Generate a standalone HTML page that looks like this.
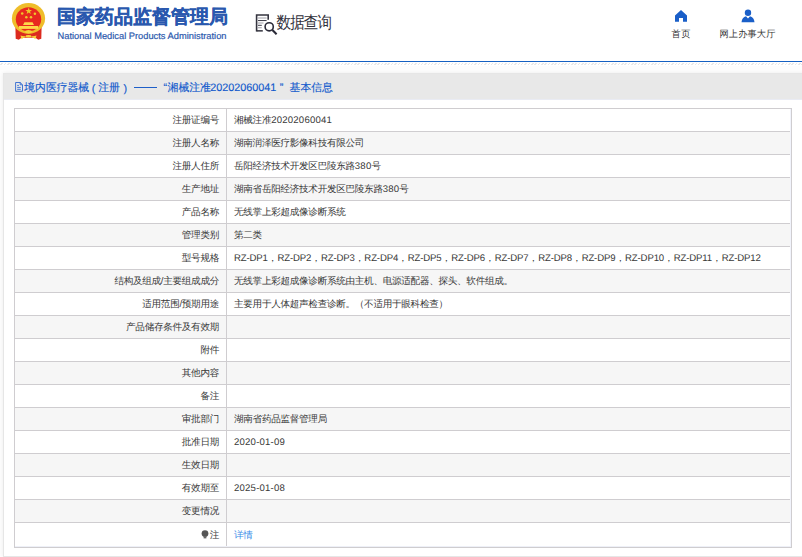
<!DOCTYPE html>
<html><head><meta charset="utf-8">
<style>
*{margin:0;padding:0;box-sizing:border-box}
html,body{width:802px;height:557px;overflow:hidden;background:#fff;font-family:"Liberation Sans",sans-serif;text-rendering:geometricPrecision}
#hd{position:absolute;left:0;top:0;width:802px;height:61px;background:#fff}
#emb{position:absolute;left:0;top:0;width:56px;height:44px}
#t1{position:absolute;left:57px;top:6px;font-size:19px;font-weight:bold;color:#2958ae;-webkit-text-stroke:0.25px #2958ae;white-space:nowrap;line-height:24px}
#t2{position:absolute;left:57.5px;top:29.6px;font-size:9.3px;color:#2c5aae;-webkit-text-stroke:0.2px #2c5aae;white-space:nowrap;line-height:12px}
#qicon{position:absolute;left:255px;top:13px;width:23px;height:23px}
#qt{position:absolute;left:276.5px;top:12px;font-size:14.5px;letter-spacing:-0.87px;transform:scaleY(1.15);transform-origin:0 0;color:#30303a;white-space:nowrap;line-height:20px}
.nav{position:absolute;top:0;text-align:center;font-size:9.2px;color:#333;white-space:nowrap}
.nav span{position:absolute;top:28.4px;line-height:12px;transform:scaleY(1.03);transform-origin:0 0}
#bl{position:absolute;left:0;top:61px;width:802px;height:1px;background:#1560c2}
#hatch{position:absolute;left:0;top:63px;width:802px;height:2px;
 background:repeating-linear-gradient(135deg,#fff 0,#fff 1.3px,#e8e8e8 1.3px,#e8e8e8 2.36px)}
#bg{position:absolute;left:0;top:66px;width:802px;height:491px;background:#fdfdfd}
#panel{position:absolute;left:3px;top:73px;width:810px;height:484px;background:#fff;border:1px solid #e6e6e6;box-shadow:0 0 4px rgba(0,0,0,0.07)}
#ph{position:absolute;left:0;top:0;width:100%;height:26px;background:#e8e8e8}
#pht{position:absolute;left:0;top:0;color:#1159cc;font-size:10.8px;line-height:14px;-webkit-text-stroke:0.15px #1159cc}
#pht span{position:absolute;top:81px;white-space:nowrap}
#tb{position:absolute;left:14px;top:108px;width:778px;border-collapse:collapse;font-size:9.6px;color:#383838}
#tb td{height:23px;border:1px solid #cfcdd0;padding:0;line-height:21px;white-space:nowrap;letter-spacing:-0.3px}
#tb .n{letter-spacing:0.2px}
#tb .rz{letter-spacing:-0.15px}
#tb .c{letter-spacing:0.1px}
#tb td.l{width:212px;text-align:right;padding-right:7px}
#tb td.r{padding-left:7px}
#tb tr:nth-child(even) td{background:#f6f6f6}
#tb tr.last td{height:25px;line-height:23px}
</style></head><body>
<div id="hd">
 <svg id="emb" viewBox="0 0 56 44">
  <path d="M15.4 27 L41.6 27 L41.3 38.8 L38.2 39.8 L35.5 37.8 L21.5 37.8 L18.8 39.8 L15.7 38.8 Z" fill="#dc2a1e"/>
  <ellipse cx="28.5" cy="18.4" rx="16.6" ry="15.3" fill="#efbd2a"/>
  <ellipse cx="28.5" cy="19.2" rx="12.7" ry="12" fill="#e8291f"/>
    <polygon points="28.7,7.6 29.55,10 32,10 30.05,11.5 30.75,13.9 28.7,12.4 26.65,13.9 27.35,11.5 25.4,10 27.85,10" fill="#efc82a"/>
  <circle cx="22.2" cy="13.5" r="1.25" fill="#efc82a"/>
  <circle cx="34.9" cy="13.8" r="1.25" fill="#efc82a"/>
  <circle cx="26.3" cy="17.3" r="1.25" fill="#efc82a"/>
  <circle cx="31" cy="17.3" r="1.25" fill="#efc82a"/>
  <path d="M23 25 L24.5 22.3 H32.5 L34 25 Z" fill="#ffd84a"/>
  <rect x="19" y="26" width="19" height="2.9" fill="#ffd84a"/>
  <ellipse cx="28.5" cy="31.8" rx="3.4" ry="1.7" fill="#f7d23a"/>
  <ellipse cx="28.5" cy="36.3" rx="3" ry="1.3" fill="#f7d23a"/>
  <path d="M20.5 35.6 Q24 36.4 25.6 36 L25.2 37.3 Q23 37.6 21.6 39.2 Z M36.5 35.6 Q33 36.4 31.4 36 L31.8 37.3 Q34 37.6 35.4 39.2 Z" fill="#f7d23a"/>
 </svg>
 <div id="t1">国家药品监督管理局</div>
 <div id="t2">National Medical Products Administration</div>
 <svg id="qicon" viewBox="0 0 23 23">
  <path d="M1.6 18.6 V2 H13.2 V6.8" fill="none" stroke="#34343f" stroke-width="1.6"/>
  <path d="M1.6 17.85 H7.8" fill="none" stroke="#34343f" stroke-width="1.5"/>
  <path d="M3 5.04 H11.6 M3 9.96 H8.5 M3 14.8 H6.8" stroke="#a0a0a8" stroke-width="1.1"/>
  <path d="M3 7.55 H11.6 M3 12.3 H6.8" stroke="#3a3a46" stroke-width="1"/>
  <circle cx="14.2" cy="13.8" r="4.1" fill="none" stroke="#2a2a38" stroke-width="1.6"/>
  <path d="M17.4 17.1 L21.6 21.3" stroke="#2a2a38" stroke-width="2.1"/>
 </svg>
 <div id="qt">数据查询</div>
 <svg style="position:absolute;left:674px;top:9px" width="14" height="14" viewBox="0 0 14 14">
  <path d="M7 1 L13 6.4 V12.8 H9 V9 H5 V12.8 H1 V6.4 Z" fill="#1a5fc8"/>
 </svg>
 <div class="nav" style="left:671.5px;width:20px"><span style="left:0;letter-spacing:0.5px">首页</span></div>
 <svg style="position:absolute;left:741px;top:9px" width="14" height="14" viewBox="0 0 14 14">
  <circle cx="7" cy="3.8" r="3.2" fill="#1a5fc8"/>
  <path d="M0.5 13.3 Q1 8 5 7.2 L7 9.5 L9 7.2 Q13 8 13.5 13.3 Z" fill="#1a5fc8"/>
 </svg>
 <div class="nav" style="left:719.5px;width:60px"><span style="left:0;letter-spacing:0.15px">网上办事大厅</span></div>
</div>
<div id="bl"></div>
<div id="hatch"></div>
<div id="bg"></div>
<div id="panel">
 <div id="ph"></div>
</div>
<div style="position:absolute;left:4px;top:99px;width:798px;height:1px;background:#e9ebf3"></div>
<div id="pht">
  <svg style="position:absolute;left:14px;top:81px" width="10" height="12" viewBox="0 0 10 12"><path d="M1.6 1.5 H6.2 L8.5 3.8 V10.3 H1.6 Z M6.2 1.5 V3.8 H8.5 M3.2 4.4 H4.9 M3.2 6.4 H6.8 M3.2 8.3 H6.8" fill="none" stroke="#2f68d0" stroke-width="0.9"/></svg>
  <span style="left:24.3px">境内医疗器械</span>
  <span style="left:91.8px;top:81.5px">(</span>
  <span style="left:98.3px">注册</span>
  <span style="left:123.6px;top:81.5px">)</span>
  <div style="position:absolute;left:134px;top:87px;width:23px;height:1px;background:#1e5fc8"></div>
  <span style="left:163.5px">&#8220;</span>
  <span style="left:167.6px">湘械注准</span>
  <span style="left:210.3px">20202060041</span>
  <span style="left:279.8px">&#8221;</span>
  <span style="left:289.6px">基本信息</span>
</div>
<table id="tb">
<tr><td class="l">注册证编号</td><td class="r">湘械注准<span class="n">20202060041</span></td></tr>
<tr><td class="l">注册人名称</td><td class="r">湖南润泽医疗影像科技有限公司</td></tr>
<tr><td class="l">注册人住所</td><td class="r">岳阳经济技术开发区巴陵东路<span class="n">380</span>号</td></tr>
<tr><td class="l">生产地址</td><td class="r">湖南省岳阳经济技术开发区巴陵东路<span class="n">380</span>号</td></tr>
<tr><td class="l">产品名称</td><td class="r">无线掌上彩超成像诊断系统</td></tr>
<tr><td class="l">管理类别</td><td class="r">第二类</td></tr>
<tr><td class="l">型号规格</td><td class="r"><span class="rz">RZ-DP1</span><span class="c">，</span><span class="rz">RZ-DP2</span><span class="c">，</span><span class="rz">RZ-DP3</span><span class="c">，</span><span class="rz">RZ-DP4</span><span class="c">，</span><span class="rz">RZ-DP5</span><span class="c">，</span><span class="rz">RZ-DP6</span><span class="c">，</span><span class="rz">RZ-DP7</span><span class="c">，</span><span class="rz">RZ-DP8</span><span class="c">，</span><span class="rz">RZ-DP9</span><span class="c">，</span><span class="rz">RZ-DP10</span><span class="c">，</span><span class="rz">RZ-DP11</span><span class="c">，</span><span class="rz">RZ-DP12</span></td></tr>
<tr><td class="l">结构及组成/主要组成成分</td><td class="r">无线掌上彩超成像诊断系统由主机、电源适配器、探头、软件组成。</td></tr>
<tr><td class="l">适用范围/预期用途</td><td class="r">主要用于人体超声检查诊断。（不适用于眼科检查）</td></tr>
<tr><td class="l">产品储存条件及有效期</td><td class="r"></td></tr>
<tr><td class="l">附件</td><td class="r"></td></tr>
<tr><td class="l">其他内容</td><td class="r"></td></tr>
<tr><td class="l">备注</td><td class="r"></td></tr>
<tr><td class="l">审批部门</td><td class="r">湖南省药品监督管理局</td></tr>
<tr><td class="l">批准日期</td><td class="r"><span class="n">2020-01-09</span></td></tr>
<tr><td class="l">生效日期</td><td class="r"></td></tr>
<tr><td class="l">有效期至</td><td class="r"><span class="n">2025-01-08</span></td></tr>
<tr><td class="l">变更情况</td><td class="r"></td></tr>
<tr class="last"><td class="l"><svg width="8" height="9" viewBox="0 0 8 9" style="vertical-align:-1px;margin-right:1px"><circle cx="4" cy="3.6" r="3.4" fill="#555"/><rect x="2.6" y="6.2" width="2.8" height="2.2" fill="#666"/></svg>注</td><td class="r" style="color:#3b8ee8">详情</td></tr>
</table>
<div style="position:absolute;left:790px;top:109px;width:1px;height:437px;background:#f1f3fb"></div>
<div style="position:absolute;left:15px;top:546px;width:776px;height:1px;background:#eef0f7"></div>

</body></html>
